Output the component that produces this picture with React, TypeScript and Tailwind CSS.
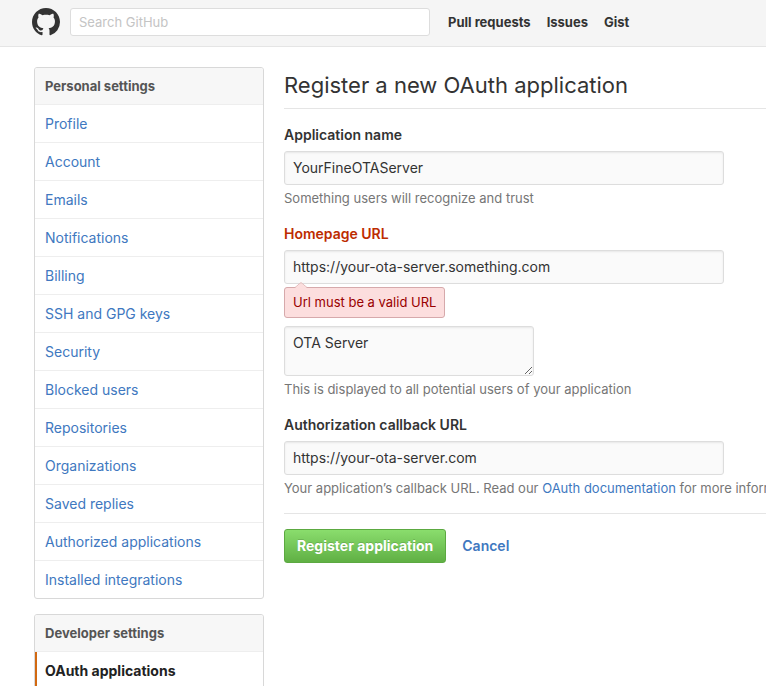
import React from "react";

const personalLinks = [
  "Profile",
  "Account",
  "Emails",
  "Notifications",
  "Billing",
  "SSH and GPG keys",
  "Security",
  "Blocked users",
  "Repositories",
  "Organizations",
  "Saved replies",
  "Authorized applications",
  "Installed integrations",
];

const fieldClass =
  "block rounded-[3px] border border-[#dddddd] bg-[#fafafa] px-2 text-sm text-[#333333] shadow-[inset_0_1px_2px_rgba(0,0,0,0.075)] outline-none";

const inputClass = `${fieldClass} h-[34px] w-full max-w-[440px] pb-0.5`;

function Mark() {
  return (
    <svg viewBox="0 0 16 16" className="size-7" fill="#333333" aria-hidden="true">
      <path d="M8 0C3.58 0 0 3.58 0 8c0 3.54 2.29 6.53 5.47 7.59.4.07.55-.17.55-.38 0-.19-.01-.82-.01-1.49-2.01.37-2.53-.49-2.69-.94-.09-.23-.48-.94-.82-1.13-.28-.15-.68-.52-.01-.53.63-.01 1.08.58 1.23.82.72 1.21 1.87.87 2.33.66.07-.52.28-.87.51-1.07-1.78-.2-3.64-.89-3.64-3.95 0-.87.31-1.59.82-2.15-.08-.2-.36-1.02.08-2.12 0 0 .67-.21 2.2.82.64-.18 1.32-.27 2-.27s1.36.09 2 .27c1.53-1.04 2.2-.82 2.2-.82.44 1.1.16 1.92.08 2.12.51.56.82 1.27.82 2.15 0 3.07-1.87 3.75-3.65 3.95.29.25.54.73.54 1.48 0 1.07-.01 1.93-.01 2.2 0 .21.15.46.55.38A8.01 8.01 0 0 0 16 8c0-4.42-3.58-8-8-8Z" />
    </svg>
  );
}

function Header() {
  return (
    <header className="flex h-[47px] items-center border-b border-[#e5e5e5] bg-[#f5f5f5] pb-0.5 pl-8">
      <a href="#home" aria-label="GitHub">
        <Mark />
      </a>
      <input
        type="search"
        aria-label="Search GitHub"
        placeholder="Search GitHub"
        className="ml-2.5 h-7 w-[360px] rounded-[3px] border border-[#dddddd] bg-white px-2 text-[13px] text-[#333333] outline-none placeholder:text-[#c4c4c4]"
      />
      <nav className="ml-[18px] flex gap-4 text-[13px] font-bold text-[#333333]">
        <a href="#pulls">Pull requests</a>
        <a href="#issues">Issues</a>
        <a href="#gist">Gist</a>
      </nav>
    </header>
  );
}

function Menu({ title, children }: { title: string; children: React.ReactNode }) {
  return (
    <nav
      aria-label={title}
      className="overflow-hidden rounded-[3px] border border-[#d8d8d8] bg-white"
    >
      <h2 className="border-b border-[#eeeeee] bg-[#f7f7f7] px-2.5 py-2 text-[13px] leading-5 font-bold text-[#555555]">
        {title}
      </h2>
      {children}
    </nav>
  );
}

function Label({ htmlFor, error, children }: { htmlFor: string; error?: boolean; children: React.ReactNode }) {
  return (
    <label
      htmlFor={htmlFor}
      className={`mb-1.5 block text-sm leading-5 font-semibold ${error ? "text-[#bd2c00]" : "text-[#333333]"}`}
    >
      {children}
    </label>
  );
}

function Hint({ children }: { children: React.ReactNode }) {
  return <p className="mt-[3px] text-[13px] leading-5 whitespace-nowrap text-[#767676]">{children}</p>;
}

export default function App() {
  return (
    <div className="h-screen overflow-hidden bg-white font-['Inter',sans-serif] text-sm text-[#333333]">
      <Header />
      <div className="flex gap-5 pt-5 pl-[34px]">
        <aside className="flex w-[230px] shrink-0 flex-col gap-[15px]">
          <Menu title="Personal settings">
            {personalLinks.map((text) => (
              <a
                key={text}
                href="#settings"
                className="block border-b border-[#eeeeee] px-2.5 py-2 leading-[21px] text-[#4078c0] last:border-b-0"
              >
                {text}
              </a>
            ))}
          </Menu>
          <Menu title="Developer settings">
            <a
              href="#oauth"
              aria-current="page"
              className="-ml-px block border-l-[3px] border-[#d26911] py-2 pl-2 leading-[21px] font-bold text-[#222222]"
            >
              OAuth applications
            </a>
          </Menu>
        </aside>

        <main className="min-w-0 flex-1 overflow-hidden">
          <h1 className="border-b border-[#e5e5e5] pb-1 text-[22px] leading-[37px] whitespace-nowrap">
            Register a new OAuth application
          </h1>
          <form className="pt-4" onSubmit={(event) => event.preventDefault()}>
            <Label htmlFor="name">Application name</Label>
            <input id="name" type="text" defaultValue="YourFineOTAServer" className={inputClass} />
            <Hint>Something users will recognize and trust</Hint>

            <div className="pt-4">
              <Label htmlFor="homepage" error>
                Homepage URL
              </Label>
              <input
                id="homepage"
                type="text"
                aria-invalid="true"
                aria-describedby="homepage-error"
                defaultValue="https://your-ota-server.something.com"
                className={inputClass}
              />
              <p
                id="homepage-error"
                className="relative mt-[3px] w-fit rounded-[3px] border border-[#d6a9ab] bg-[#fcdede] px-2 py-1 text-[13px] leading-[21px] text-[#990000]"
              >
                <svg
                  viewBox="0 0 12 7"
                  className="absolute -top-1.5 left-2.5 h-[7px] w-3"
                  aria-hidden="true"
                >
                  <path d="M0 6 6 1l6 5v1H0Z" fill="#fcdede" />
                  <path d="M0 5.5 6 .5l6 5" fill="none" stroke="#e5bcbc" />
                </svg>
                Url must be a valid URL
              </p>
            </div>

            <textarea
              aria-label="Application description"
              defaultValue="OTA Server"
              className={`${fieldClass} mt-2 h-[50px] w-[250px] resize py-[6px] leading-5`}
            />
            <Hint>This is displayed to all potential users of your application</Hint>

            <div className="pt-4">
              <Label htmlFor="callback">Authorization callback URL</Label>
              <input
                id="callback"
                type="text"
                defaultValue="https://your-ota-server.com"
                className={inputClass}
              />
              <Hint>
                Your application’s callback URL. Read our{" "}
                <a href="#docs" className="text-[#4078c0]">
                  OAuth documentation
                </a>{" "}
                for more information.
              </Hint>
            </div>

            <div className="mt-[15px] flex items-center gap-4 border-t border-[#e5e5e5] pt-[15px]">
              <button
                type="submit"
                className="h-[34px] rounded-[3px] border border-[#5ca941] bg-linear-to-b from-[#8add6d] to-[#60b044] px-3 font-bold text-white [text-shadow:0_-1px_0_rgba(0,0,0,0.15)]"
              >
                Register application
              </button>
              <a href="#cancel" className="font-semibold text-[#4078c0]">
                Cancel
              </a>
            </div>
          </form>
        </main>
      </div>
    </div>
  );
}
